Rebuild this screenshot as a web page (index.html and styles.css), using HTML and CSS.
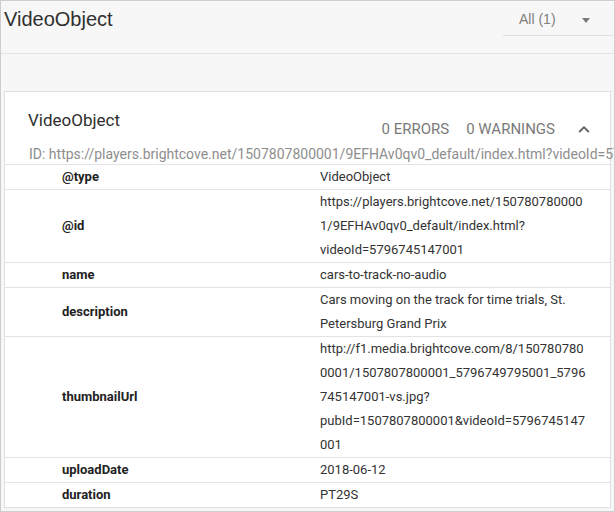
FILE: index.html
```html
<!DOCTYPE html>
<html>
<head>
<meta charset="utf-8">
<link rel="stylesheet" href="styles.css">
</head>
<body>
<div class="frame">
  <header class="top">
    <h1 class="top-title">VideoObject</h1>
    <div class="select">
      <span class="select-label">All (1)</span>
      <span class="select-arrow"></span>
    </div>
  </header>
  <section class="card">
    <div class="card-head">
      <h2 class="card-title">VideoObject</h2>
      <div class="stats"><span>0 ERRORS</span><span>0 WARNINGS</span></div>
      <svg class="caret" width="12" height="8" viewBox="0 0 12 8"><path d="M1.2 7 L6 2.2 L10.8 7" fill="none" stroke="#5f5f5f" stroke-width="1.8"/></svg>
    </div>
    <div class="card-id">ID: https://players.brightcove.net/1507807800001/9EFHAv0qv0_default/index.html?videoId=5796745147001</div>
    <div class="props">
      <div class="row"><div class="key">@type</div><div class="val">VideoObject</div></div>
      <div class="row"><div class="key">@id</div><div class="val">https://players.brightcove.net/150780780000<br>1/9EFHAv0qv0_default/index.html?<br>videoId=5796745147001</div></div>
      <div class="row"><div class="key">name</div><div class="val">cars-to-track-no-audio</div></div>
      <div class="row"><div class="key">description</div><div class="val">Cars moving on the track for time trials, St.<br>Petersburg Grand Prix</div></div>
      <div class="row"><div class="key">thumbnailUrl</div><div class="val">http://f1.media.brightcove.com/8/150780780<br>0001/1507807800001_5796749795001_5796<br>745147001-vs.jpg?<br>pubId=1507807800001&amp;videoId=5796745147<br>001</div></div>
      <div class="row"><div class="key">uploadDate</div><div class="val">2018-06-12</div></div>
      <div class="row"><div class="key">duration</div><div class="val">PT29S</div></div>
    </div>
  </section>
</div>
</body>
</html>
```
FILE: styles.css
```css
html, body {
  margin: 0;
  padding: 0;
  background: #f7f7f7;
}
.frame {
  box-sizing: border-box;
  width: 615px;
  height: 512px;
  border: 1px solid #cdcdcd;
  background: #f7f7f7;
  overflow: hidden;
  font-family: Roboto, "Liberation Sans", sans-serif;
}
.top {
  display: flex;
  justify-content: space-between;
  align-items: flex-start;
  height: 45px;
  padding: 7px 0 0 3px;
  border-bottom: 1px solid #e3e3e3;
}
.top-title {
  margin: 0;
  font-family: "Liberation Sans", Arial, sans-serif;
  font-weight: normal;
  font-size: 20px;
  line-height: 23px;
  color: #303030;
}
.select {
  box-sizing: border-box;
  width: 110px;
  margin-right: 1px;
  padding: 3px 0 8px 16px;
  display: flex;
  align-items: flex-start;
  border-bottom: 1px solid #e0e0e0;
}
.select-label {
  font-family: "Liberation Sans", Arial, sans-serif;
  font-size: 14px;
  line-height: 16px;
  color: #808080;
}
.select-arrow {
  margin: 7px 23px 0 auto;
  width: 0;
  height: 0;
  border-left: 4px solid transparent;
  border-right: 4px solid transparent;
  border-top: 5px solid #7a7a7a;
}
.card {
  margin: 37px 3px 0 3px;
  border: 1px solid #e0e0e0;
  background: #fff;
}
.card-head {
  display: flex;
  align-items: flex-start;
  height: 36px;
  padding: 17px 20px 0 23px;
}
.card-title {
  flex: 1;
  margin: 0;
  font-weight: normal;
  font-size: 17px;
  line-height: 22px;
  color: #2e2e2e;
}
.stats {
  display: flex;
  gap: 17px;
  margin-top: 10px;
  font-size: 15px;
  line-height: 20px;
  color: #7a7a7a;
}
.caret {
  display: block;
  margin: 16px 0 0 23px;
}
.card-id {
  padding-left: 24px;
  font-size: 14px;
  line-height: 19px;
  color: #8e8e8e;
  white-space: nowrap;
}
.row {
  display: grid;
  grid-template-columns: 315px 1fr;
  align-items: center;
  border-top: 1px solid #e3e3e3;
  font-size: 13px;
  line-height: 24px;
}
.key {
  padding-left: 57px;
  font-weight: bold;
  color: #222;
}
.val {
  color: #333;
  white-space: nowrap;
}
```
